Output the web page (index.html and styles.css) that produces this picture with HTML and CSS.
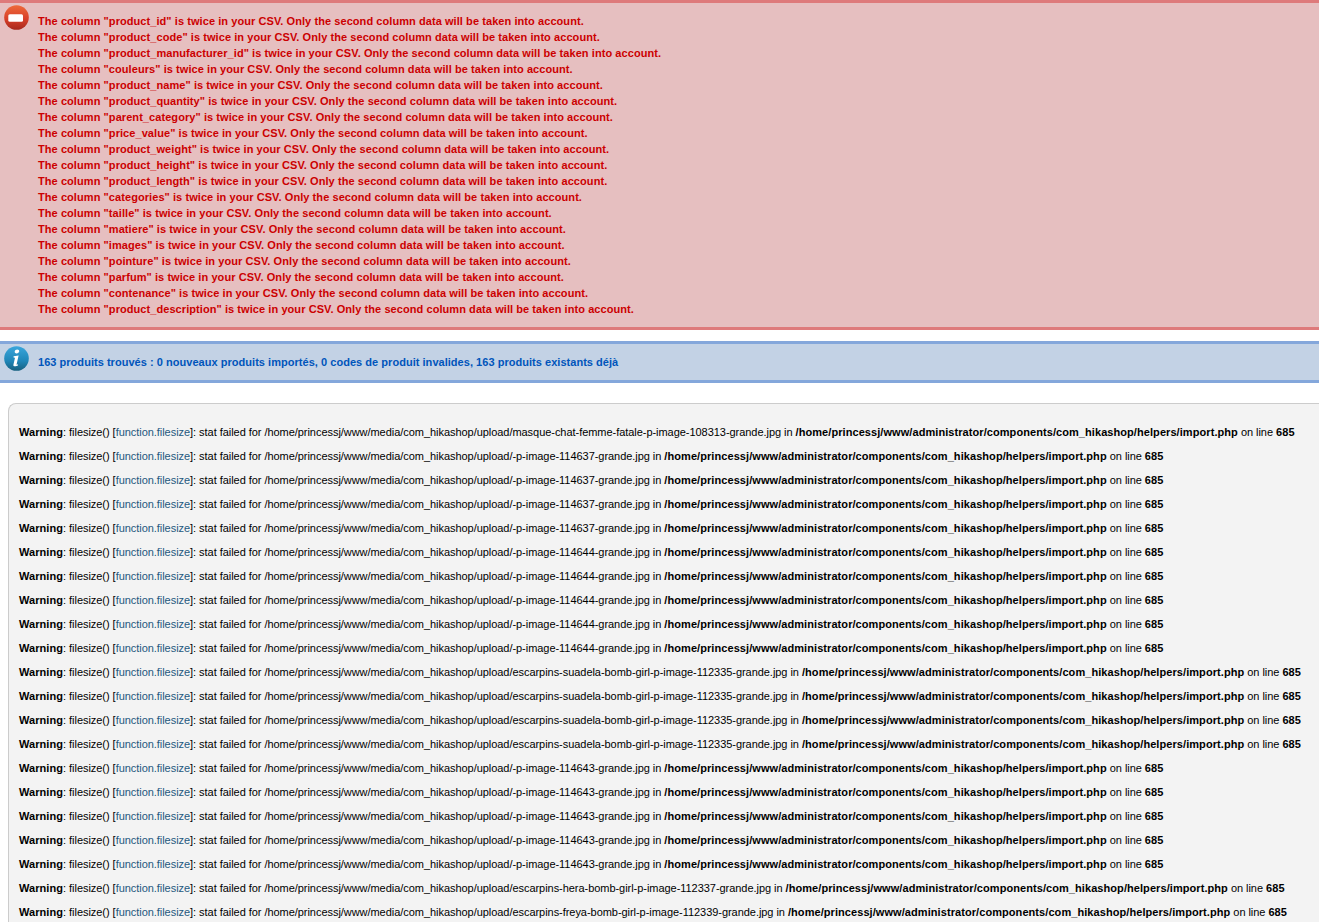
FILE: index.html
```html
<!DOCTYPE html>
<html lang="en">
<head>
<meta charset="utf-8">
<title>Import</title>
<link rel="stylesheet" href="styles.css">
</head>
<body>
<section class="msg msg-error">
<svg class="msg-icon" viewBox="0 0 25 25" width="25" height="25"><defs><linearGradient id="eg" x1="0" y1="0" x2="0" y2="1"><stop offset="0" stop-color="#ee6a3a"/><stop offset="0.55" stop-color="#d8402a"/><stop offset="1" stop-color="#a8281c"/></linearGradient></defs><circle cx="12.5" cy="12.5" r="12.3" fill="url(#eg)"/><rect x="4.300" y="9.200" width="14.700" height="7.600" rx="1.500" fill="#fff"/></svg>
<ul class="msg-list">
<li>The column "product_id" is twice in your CSV. Only the second column data will be taken into account.</li>
<li>The column "product_code" is twice in your CSV. Only the second column data will be taken into account.</li>
<li>The column "product_manufacturer_id" is twice in your CSV. Only the second column data will be taken into account.</li>
<li>The column "couleurs" is twice in your CSV. Only the second column data will be taken into account.</li>
<li>The column "product_name" is twice in your CSV. Only the second column data will be taken into account.</li>
<li>The column "product_quantity" is twice in your CSV. Only the second column data will be taken into account.</li>
<li>The column "parent_category" is twice in your CSV. Only the second column data will be taken into account.</li>
<li>The column "price_value" is twice in your CSV. Only the second column data will be taken into account.</li>
<li>The column "product_weight" is twice in your CSV. Only the second column data will be taken into account.</li>
<li>The column "product_height" is twice in your CSV. Only the second column data will be taken into account.</li>
<li>The column "product_length" is twice in your CSV. Only the second column data will be taken into account.</li>
<li>The column "categories" is twice in your CSV. Only the second column data will be taken into account.</li>
<li>The column "taille" is twice in your CSV. Only the second column data will be taken into account.</li>
<li>The column "matiere" is twice in your CSV. Only the second column data will be taken into account.</li>
<li>The column "images" is twice in your CSV. Only the second column data will be taken into account.</li>
<li>The column "pointure" is twice in your CSV. Only the second column data will be taken into account.</li>
<li>The column "parfum" is twice in your CSV. Only the second column data will be taken into account.</li>
<li>The column "contenance" is twice in your CSV. Only the second column data will be taken into account.</li>
<li>The column "product_description" is twice in your CSV. Only the second column data will be taken into account.</li>
</ul>
</section>
<section class="msg msg-info">
<svg class="msg-icon" viewBox="0 0 25 25" width="25" height="25"><defs><linearGradient id="ig" x1="0" y1="0" x2="0" y2="1"><stop offset="0" stop-color="#3aa6dc"/><stop offset="0.6" stop-color="#1f86b8"/><stop offset="1" stop-color="#17607f"/></linearGradient></defs><circle cx="12.5" cy="12.5" r="12.3" fill="url(#ig)"/><path d="M13.2 3.6c1.3 0 2.2.8 2 1.9-.2 1.1-1.3 1.9-2.6 1.9s-2.1-.8-1.9-1.9c.2-1.1 1.2-1.9 2.5-1.9zM9.6 10.2l5-.6-2 8.6c-.1.5.3.6 1.5.1l-.2 1.2c-1.500.9-5 1.600-4.500-.8l1.500-6.500c.1-.6-.2-.8-1.400-.8z" fill="#fff"/></svg>
<ul class="msg-list">
<li>163 produits trouvés : 0 nouveaux produits importés, 0 codes de produit invalides, 163 produits existants déjà</li>
</ul>
</section>
<section class="log">
<p><b>Warning</b>: filesize() [<a href="#">function.filesize</a>]: stat failed for /home/princessj/www/media/com_hikashop/upload/masque-chat-femme-fatale-p-image-108313-grande.jpg in <b>/home/princessj/www/administrator/components/com_hikashop/helpers/import.php</b> on line <b>685</b></p>
<p><b>Warning</b>: filesize() [<a href="#">function.filesize</a>]: stat failed for /home/princessj/www/media/com_hikashop/upload/-p-image-114637-grande.jpg in <b>/home/princessj/www/administrator/components/com_hikashop/helpers/import.php</b> on line <b>685</b></p>
<p><b>Warning</b>: filesize() [<a href="#">function.filesize</a>]: stat failed for /home/princessj/www/media/com_hikashop/upload/-p-image-114637-grande.jpg in <b>/home/princessj/www/administrator/components/com_hikashop/helpers/import.php</b> on line <b>685</b></p>
<p><b>Warning</b>: filesize() [<a href="#">function.filesize</a>]: stat failed for /home/princessj/www/media/com_hikashop/upload/-p-image-114637-grande.jpg in <b>/home/princessj/www/administrator/components/com_hikashop/helpers/import.php</b> on line <b>685</b></p>
<p><b>Warning</b>: filesize() [<a href="#">function.filesize</a>]: stat failed for /home/princessj/www/media/com_hikashop/upload/-p-image-114637-grande.jpg in <b>/home/princessj/www/administrator/components/com_hikashop/helpers/import.php</b> on line <b>685</b></p>
<p><b>Warning</b>: filesize() [<a href="#">function.filesize</a>]: stat failed for /home/princessj/www/media/com_hikashop/upload/-p-image-114644-grande.jpg in <b>/home/princessj/www/administrator/components/com_hikashop/helpers/import.php</b> on line <b>685</b></p>
<p><b>Warning</b>: filesize() [<a href="#">function.filesize</a>]: stat failed for /home/princessj/www/media/com_hikashop/upload/-p-image-114644-grande.jpg in <b>/home/princessj/www/administrator/components/com_hikashop/helpers/import.php</b> on line <b>685</b></p>
<p><b>Warning</b>: filesize() [<a href="#">function.filesize</a>]: stat failed for /home/princessj/www/media/com_hikashop/upload/-p-image-114644-grande.jpg in <b>/home/princessj/www/administrator/components/com_hikashop/helpers/import.php</b> on line <b>685</b></p>
<p><b>Warning</b>: filesize() [<a href="#">function.filesize</a>]: stat failed for /home/princessj/www/media/com_hikashop/upload/-p-image-114644-grande.jpg in <b>/home/princessj/www/administrator/components/com_hikashop/helpers/import.php</b> on line <b>685</b></p>
<p><b>Warning</b>: filesize() [<a href="#">function.filesize</a>]: stat failed for /home/princessj/www/media/com_hikashop/upload/-p-image-114644-grande.jpg in <b>/home/princessj/www/administrator/components/com_hikashop/helpers/import.php</b> on line <b>685</b></p>
<p><b>Warning</b>: filesize() [<a href="#">function.filesize</a>]: stat failed for /home/princessj/www/media/com_hikashop/upload/escarpins-suadela-bomb-girl-p-image-112335-grande.jpg in <b>/home/princessj/www/administrator/components/com_hikashop/helpers/import.php</b> on line <b>685</b></p>
<p><b>Warning</b>: filesize() [<a href="#">function.filesize</a>]: stat failed for /home/princessj/www/media/com_hikashop/upload/escarpins-suadela-bomb-girl-p-image-112335-grande.jpg in <b>/home/princessj/www/administrator/components/com_hikashop/helpers/import.php</b> on line <b>685</b></p>
<p><b>Warning</b>: filesize() [<a href="#">function.filesize</a>]: stat failed for /home/princessj/www/media/com_hikashop/upload/escarpins-suadela-bomb-girl-p-image-112335-grande.jpg in <b>/home/princessj/www/administrator/components/com_hikashop/helpers/import.php</b> on line <b>685</b></p>
<p><b>Warning</b>: filesize() [<a href="#">function.filesize</a>]: stat failed for /home/princessj/www/media/com_hikashop/upload/escarpins-suadela-bomb-girl-p-image-112335-grande.jpg in <b>/home/princessj/www/administrator/components/com_hikashop/helpers/import.php</b> on line <b>685</b></p>
<p><b>Warning</b>: filesize() [<a href="#">function.filesize</a>]: stat failed for /home/princessj/www/media/com_hikashop/upload/-p-image-114643-grande.jpg in <b>/home/princessj/www/administrator/components/com_hikashop/helpers/import.php</b> on line <b>685</b></p>
<p><b>Warning</b>: filesize() [<a href="#">function.filesize</a>]: stat failed for /home/princessj/www/media/com_hikashop/upload/-p-image-114643-grande.jpg in <b>/home/princessj/www/administrator/components/com_hikashop/helpers/import.php</b> on line <b>685</b></p>
<p><b>Warning</b>: filesize() [<a href="#">function.filesize</a>]: stat failed for /home/princessj/www/media/com_hikashop/upload/-p-image-114643-grande.jpg in <b>/home/princessj/www/administrator/components/com_hikashop/helpers/import.php</b> on line <b>685</b></p>
<p><b>Warning</b>: filesize() [<a href="#">function.filesize</a>]: stat failed for /home/princessj/www/media/com_hikashop/upload/-p-image-114643-grande.jpg in <b>/home/princessj/www/administrator/components/com_hikashop/helpers/import.php</b> on line <b>685</b></p>
<p><b>Warning</b>: filesize() [<a href="#">function.filesize</a>]: stat failed for /home/princessj/www/media/com_hikashop/upload/-p-image-114643-grande.jpg in <b>/home/princessj/www/administrator/components/com_hikashop/helpers/import.php</b> on line <b>685</b></p>
<p><b>Warning</b>: filesize() [<a href="#">function.filesize</a>]: stat failed for /home/princessj/www/media/com_hikashop/upload/escarpins-hera-bomb-girl-p-image-112337-grande.jpg in <b>/home/princessj/www/administrator/components/com_hikashop/helpers/import.php</b> on line <b>685</b></p>
<p><b>Warning</b>: filesize() [<a href="#">function.filesize</a>]: stat failed for /home/princessj/www/media/com_hikashop/upload/escarpins-freya-bomb-girl-p-image-112339-grande.jpg in <b>/home/princessj/www/administrator/components/com_hikashop/helpers/import.php</b> on line <b>685</b></p>
</section>
</body>
</html>
```
FILE: styles.css
```css
html, body {
  margin: 0;
  height: 922px;
  overflow: hidden;
  background: #fff;
}
body {
  font-family: "Liberation Sans", Arial, sans-serif;
  font-size: 11px;
  color: #000;
}
.msg {
  display: flex;
  align-items: flex-start;
  padding: 2px 0 10px 4px;
  gap: 9px;
  border-top: 3px solid;
  border-bottom: 3px solid;
  margin-bottom: 11px;
}
.msg-error {
  background: #e6bfc0;
  border-color: #de7a7b;
  color: #c00;
  letter-spacing: 0.07px;
}
.msg-info {
  background: #c3d2e5;
  border-color: #84a7db;
  color: #0055bb;
  padding-bottom: 9px;
  letter-spacing: 0.035px;
}
.msg-icon {
  flex: none;
}
.msg-list {
  list-style: none;
  margin: 0;
  padding: 8px 0 0;
  font-weight: bold;
  line-height: 16px;
}
.log {
  margin: 20px -40px 0 8px;
  padding: 16px 0 0 10px;
  background: #f3f3f3;
  border: 1px solid #ccc;
  border-right: 0;
  border-top-left-radius: 8px;
  white-space: nowrap;
  color: #000;
  letter-spacing: -0.045px;
}
.log p {
  margin: 0;
  line-height: 24px;
}
.log b {
  letter-spacing: 0.07px;
}
.log a {
  color: #25587e;
  text-decoration: none;
}
```
